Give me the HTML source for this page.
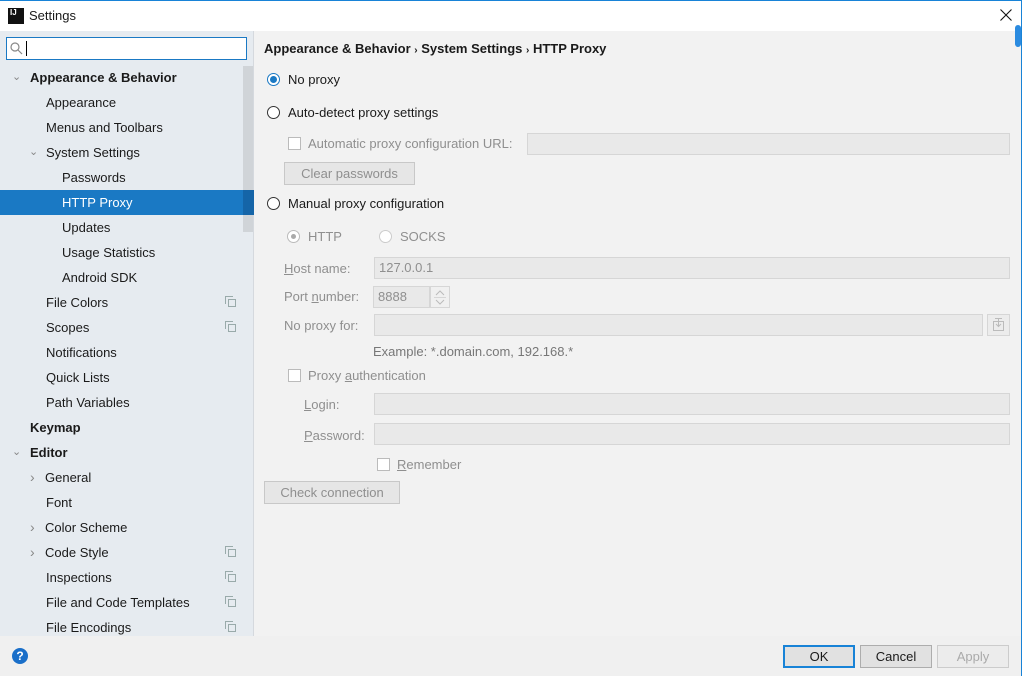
<!DOCTYPE html>
<html><head><style>
*{margin:0;padding:0;box-sizing:border-box}
body{width:1022px;height:676px;overflow:hidden;font-family:"Liberation Sans","Noto Sans CJK SC",sans-serif;font-size:13px;color:#1a1a1a;background:#f2f2f2;position:relative}
.a{position:absolute;white-space:nowrap}
.title{left:0;top:0;width:1022px;height:31px;background:#fff;border-top:1px solid #1883d7}
.side{left:0;top:31px;width:254px;height:605px;background:#e6ebf0;border-right:1px solid #d5d9de}
.row{position:absolute;left:0;width:243px;height:25px;line-height:25px}
.sel{background:#1a79c4;color:#fff}
.b{font-weight:bold}
.ic{position:absolute;left:228px;top:9px;width:8px;height:8px;border:1px solid #9aa;background:#e6ebf0}
.ic:before{content:"";position:absolute;left:-4px;top:-4px;width:7px;height:7px;border:1px solid #9aa;border-right:none;border-bottom:none}
.chev{position:absolute;font-size:11px;color:#888}
.field{position:absolute;background:#e9e9e9;border:1px solid #d6d6d6;height:22px}
.gray{color:#8f8f8f}
.radio{position:absolute;width:13px;height:13px;border:1px solid #333;border-radius:50%;background:#fff}
.cb{position:absolute;width:13px;height:13px;border:1px solid #bbb;background:#fff}
.btn{position:absolute;border:1px solid #adadad;background:#e1e1e1;text-align:center;line-height:21px;height:23px}
</style></head><body>
<div class="a title"></div>
<div class="a" style="left:8px;top:8px;width:16px;height:16px;background:#111;color:#fff;font-size:8px;font-weight:bold;line-height:10px;padding-left:2px">IJ</div>
<div class="a" style="left:29px;top:8px;font-size:13px">Settings</div>
<svg class="a" style="left:1000px;top:9px" width="12" height="12"><path d="M0.5 0.5L11.5 11.5M11.5 0.5L0.5 11.5" stroke="#111" stroke-width="1.1"/></svg>
<div class="a" style="left:1021px;top:0;width:1px;height:676px;background:#1883d7"></div>

<div class="a side">
<div class="a" style="left:6px;top:6px;width:241px;height:23px;background:#fff;border:1px solid #1a79c4"></div>
<svg class="a" style="left:10px;top:11px" width="13" height="13"><circle cx="5" cy="5" r="4" fill="none" stroke="#888" stroke-width="1.2"/><line x1="8" y1="8" x2="12" y2="12" stroke="#888" stroke-width="1.2"/></svg>
<div class="a" style="left:26px;top:10px;width:1px;height:15px;background:#000"></div>
<div class="a" style="left:243px;top:35px;width:10px;height:166px;background:#d0d4d8"></div>
<div class="row" style="top:34px"><span class="chev" style="left:12px">&#8964;</span><span class="a b" style="left:30px">Appearance &amp; Behavior</span></div>
<div class="row" style="top:59px"><span class="a" style="left:46px">Appearance</span></div>
<div class="row" style="top:84px"><span class="a" style="left:46px">Menus and Toolbars</span></div>
<div class="row" style="top:109px"><span class="chev" style="left:29px">&#8964;</span><span class="a" style="left:46px">System Settings</span></div>
<div class="row" style="top:134px"><span class="a" style="left:62px">Passwords</span></div>
<div class="row sel" style="top:159px;width:254px"><span class="a" style="left:62px">HTTP Proxy</span><div class="a" style="left:243px;top:0;width:11px;height:25px;background:#1565a8"></div></div>
<div class="row" style="top:184px"><span class="a" style="left:62px">Updates</span></div>
<div class="row" style="top:209px"><span class="a" style="left:62px">Usage Statistics</span></div>
<div class="row" style="top:234px"><span class="a" style="left:62px">Android SDK</span></div>
<div class="row" style="top:259px"><span class="a" style="left:46px">File Colors</span><i class="ic"></i></div>
<div class="row" style="top:284px"><span class="a" style="left:46px">Scopes</span><i class="ic"></i></div>
<div class="row" style="top:309px"><span class="a" style="left:46px">Notifications</span></div>
<div class="row" style="top:334px"><span class="a" style="left:46px">Quick Lists</span></div>
<div class="row" style="top:359px"><span class="a" style="left:46px">Path Variables</span></div>
<div class="row" style="top:384px"><span class="a b" style="left:30px">Keymap</span></div>
<div class="row" style="top:409px"><span class="chev" style="left:12px">&#8964;</span><span class="a b" style="left:30px">Editor</span></div>
<div class="row" style="top:434px"><span class="chev" style="left:30px;font-size:14px">›</span><span class="a" style="left:45px">General</span></div>
<div class="row" style="top:459px"><span class="a" style="left:46px">Font</span></div>
<div class="row" style="top:484px"><span class="chev" style="left:30px;font-size:14px">›</span><span class="a" style="left:45px">Color Scheme</span></div>
<div class="row" style="top:509px"><span class="chev" style="left:30px;font-size:14px">›</span><span class="a" style="left:45px">Code Style</span><i class="ic"></i></div>
<div class="row" style="top:534px"><span class="a" style="left:46px">Inspections</span><i class="ic"></i></div>
<div class="row" style="top:559px"><span class="a" style="left:46px">File and Code Templates</span><i class="ic"></i></div>
<div class="row" style="top:584px"><span class="a" style="left:46px">File Encodings</span><i class="ic"></i></div>
</div>

<div class="a" style="left:1015px;top:25px;width:6px;height:22px;background:#2b8be0;border-radius:3px"></div>

<div class="a b" style="left:264px;top:41px">Appearance &amp; Behavior <span style="font-size:10px">›</span> System Settings <span style="font-size:10px">›</span> HTTP Proxy</div>

<div class="radio" style="left:267px;top:73px;border-color:#1a79c4"><div style="position:absolute;left:2px;top:2px;width:7px;height:7px;border-radius:50%;background:#1a79c4"></div></div>
<div class="a" style="left:288px;top:72px">No proxy</div>
<div class="radio" style="left:267px;top:106px"></div>
<div class="a" style="left:288px;top:105px">Auto-detect proxy settings</div>
<div class="cb" style="left:288px;top:137px"></div>
<div class="a gray" style="left:308px;top:136px">Automatic proxy configuration URL:</div>
<div class="field" style="left:527px;top:133px;width:483px"></div>
<div class="btn gray" style="left:284px;top:162px;width:131px;border-color:#c8c8c8;background:#e6e6e6">Clear passwords</div>
<div class="radio" style="left:267px;top:197px"></div>
<div class="a" style="left:288px;top:196px">Manual proxy configuration</div>

<div class="radio" style="left:287px;top:230px;border-color:#bbb"><div style="position:absolute;left:3px;top:3px;width:5px;height:5px;border-radius:50%;background:#aaa"></div></div>
<div class="a gray" style="left:308px;top:229px">HTTP</div>
<div class="radio" style="left:379px;top:230px;border-color:#ccc"></div>
<div class="a gray" style="left:400px;top:229px">SOCKS</div>

<div class="a gray" style="left:284px;top:261px"><u>H</u>ost name:</div>
<div class="field gray" style="left:374px;top:257px;width:636px;padding-left:4px;line-height:20px">127.0.0.1</div>
<div class="a gray" style="left:284px;top:289px">Port <u>n</u>umber:</div>
<div class="field gray" style="left:373px;top:286px;width:57px;padding-left:4px;line-height:20px">8888</div>
<div class="field" style="left:430px;top:286px;width:20px;background:#f0f0f0"></div>
<svg class="a" style="left:434px;top:288px" width="12" height="18"><path d="M2 7L6 3L10 7M2 12L6 16L10 12" fill="none" stroke="#bbb"/><line x1="0" y1="9.5" x2="12" y2="9.5" stroke="#d6d6d6"/></svg>
<div class="a gray" style="left:284px;top:318px">No proxy for:</div>
<div class="field" style="left:374px;top:314px;width:609px"></div>
<div class="field" style="left:987px;top:314px;width:23px;background:#ececec"></div>
<svg class="a" style="left:991px;top:317px" width="15" height="15"><rect x="2.5" y="4.5" width="10" height="9" fill="none" stroke="#bbb"/><path d="M4 1.5H11M7.5 2V9M5 7L7.5 9.5L10 7" fill="none" stroke="#bbb"/></svg>
<div class="a gray" style="left:373px;top:344px;color:#777">Example: *.domain.com, 192.168.*</div>
<div class="cb" style="left:288px;top:369px"></div>
<div class="a gray" style="left:308px;top:368px">Proxy <u>a</u>uthentication</div>
<div class="a gray" style="left:304px;top:397px"><u>L</u>ogin:</div>
<div class="field" style="left:374px;top:393px;width:636px"></div>
<div class="a gray" style="left:304px;top:428px"><u>P</u>assword:</div>
<div class="field" style="left:374px;top:423px;width:636px"></div>
<div class="cb" style="left:377px;top:458px"></div>
<div class="a gray" style="left:397px;top:457px"><u>R</u>emember</div>
<div class="btn gray" style="left:264px;top:481px;width:136px;border-color:#c8c8c8;background:#e6e6e6">Check connection</div>

<div class="a" style="left:0;top:636px;width:1021px;height:40px;background:#f0f0f0"></div>
<div class="a" style="left:12px;top:648px;width:16px;height:16px;border-radius:50%;background:#1a6fc9;color:#fff;font-size:12px;font-weight:bold;text-align:center;line-height:16px">?</div>
<div class="btn" style="left:783px;top:645px;width:72px;border:2px solid #1883d7;line-height:19px">OK</div>
<div class="btn" style="left:860px;top:645px;width:72px">Cancel</div>
<div class="btn gray" style="left:937px;top:645px;width:72px;border-color:#ccc;background:#ececec;color:#aaa">Apply</div>
</body></html>
